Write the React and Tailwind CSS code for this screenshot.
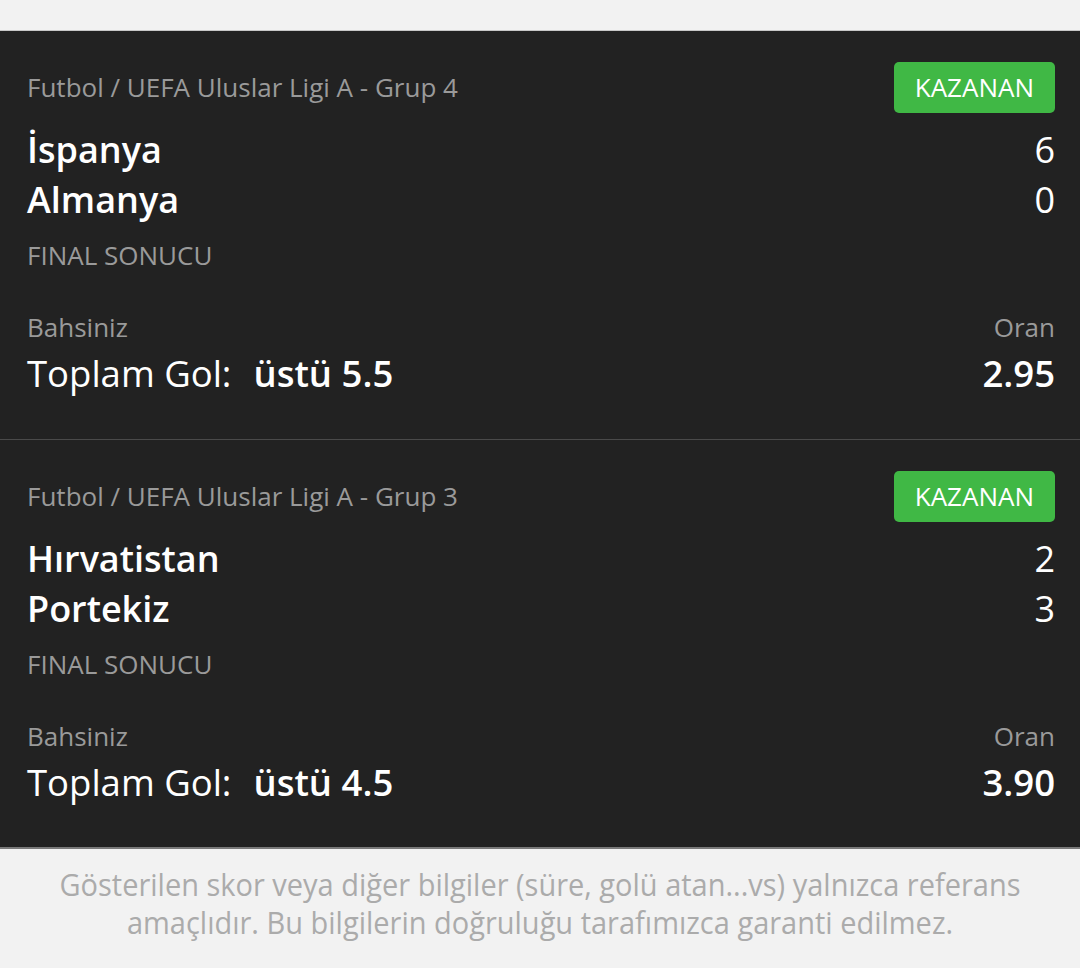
const bets = [
  {
    league: "Futbol / UEFA Uluslar Ligi A - Grup 4",
    home: "İspanya",
    away: "Almanya",
    homeScore: 6,
    awayScore: 0,
    market: "Toplam Gol:",
    pick: "üstü 5.5",
    odds: "2.95",
  },
  {
    league: "Futbol / UEFA Uluslar Ligi A - Grup 3",
    home: "Hırvatistan",
    away: "Portekiz",
    homeScore: 2,
    awayScore: 3,
    market: "Toplam Gol:",
    pick: "üstü 4.5",
    odds: "3.90",
  },
];

const BetCard = ({ bet, last }) => (
  <div
    className={`pl-[27px] pr-[25px] pt-[31px] ${
      last ? "pb-[42px]" : "pb-[43px] border-b border-[#4a4a4a]"
    }`}
  >
    {/* league + status */}
    <div className="flex justify-between items-center h-[51px]">
      <span className="text-[26px] text-[#9a9a9a]">{bet.league}</span>
      <span className="bg-[#40b845] text-white font-medium text-[26px] rounded-[5px] px-[21px] h-[51px] flex items-center">
        KAZANAN
      </span>
    </div>

    {/* teams */}
    <div className="mt-[12px] text-[36px] font-semibold text-white leading-[50px]">
      <div className="flex justify-between">
        <span>{bet.home}</span>
        <span className="font-medium">{bet.homeScore}</span>
      </div>
      <div className="flex justify-between">
        <span>{bet.away}</span>
        <span className="font-medium">{bet.awayScore}</span>
      </div>
    </div>
    <div className="mt-[12px] text-[26px] leading-[36px] text-[#9a9a9a]">
      FINAL SONUCU
    </div>

    {/* bet */}
    <div className="mt-[36px] flex justify-between text-[26px] leading-[36px] text-[#9a9a9a]">
      <span>Bahsiniz</span>
      <span>Oran</span>
    </div>
    <div className="mt-[5px] flex justify-between text-[36.5px] leading-[46px] text-white">
      <span>
        {bet.market}
        <span className="font-semibold ml-[22px]">{bet.pick}</span>
      </span>
      <span className="font-semibold">{bet.odds}</span>
    </div>
  </div>
);

export default function App() {
  return (
    <div
      className="w-[1080px] h-[968px] bg-[#f2f2f2] flex flex-col"
      style={{ fontFamily: '"Open Sans", "Noto Sans", sans-serif' }}
    >
      <div className="h-[31px] border-b border-[#c8c8c8]" />
      <div className="bg-[#222222] border-b-2 border-[#7a7a7a]">
        {bets.map((b, i) => (
          <BetCard key={i} bet={b} last={i === bets.length - 1} />
        ))}
      </div>
      <div className="pt-[16px] text-center text-[31px] leading-[38px] text-[#ababab] scale-x-[0.935]">
        Gösterilen skor veya diğer bilgiler (süre, golü atan...vs) yalnızca referans
        <br />
        amaçlıdır. Bu bilgilerin doğruluğu tarafımızca garanti edilmez.
      </div>
    </div>
  );
}
